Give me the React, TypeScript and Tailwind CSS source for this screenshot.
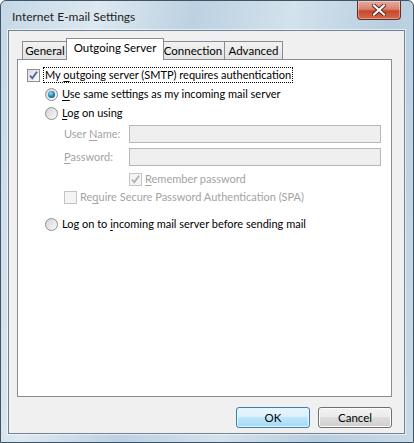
import type { ReactNode } from 'react';

const font = { fontFamily: 'Lato, "Noto Sans", sans-serif' };

function Key({ children }: { children: ReactNode }) {
  return <span className="underline underline-offset-2">{children}</span>;
}

function CheckBox({ checked, disabled }: { checked?: boolean; disabled?: boolean }) {
  return (
    <span
      className={`relative flex h-[13px] w-[13px] shrink-0 items-center justify-center border ${
        disabled ? 'border-[#c4c4c4] bg-[#f4f4f4]' : 'border-[#8e8f8f] bg-gradient-to-br from-[#dcdcdc] to-[#fbfbfb]'
      }`}
    >
      {checked && (
        <svg width="11" height="11" viewBox="0 0 11 11">
          <path
            d="M2 5.5 L4.3 8.3 L9 1.8"
            fill="none"
            stroke={disabled ? '#b0b0b0' : '#4c61a0'}
            strokeWidth="1.8"
          />
        </svg>
      )}
    </span>
  );
}

function Radio({ checked }: { checked?: boolean }) {
  return (
    <span className="flex h-[13px] w-[13px] shrink-0 items-center justify-center rounded-full border border-[#8e8f8f] bg-gradient-to-br from-[#d4d4d4] to-[#fafafa]">
      {checked && <span className="h-[7px] w-[7px] rounded-full bg-[radial-gradient(circle_at_40%_35%,#8fe0f8,#1c7fa6_55%,#0c4d6e)]" />}
    </span>
  );
}

function Tab({ label, width, active, first }: { label: string; width: string; active?: boolean; first?: boolean }) {
  if (active) {
    return (
      <div className={`relative z-10 -mx-[2px] -mb-px flex h-[22px] items-center justify-center border border-b-0 border-[#898c95] bg-white pb-[3px] text-[11.5px] ${width}`}>
        {label}
      </div>
    );
  }
  return (
    <div
      className={`flex h-[18px] items-center justify-center border border-b-0 border-[#898c95] bg-gradient-to-b from-[#f2f2f2] to-[#e3e3e3] text-[11.5px] ${width} ${
        first ? '' : 'border-l-0'
      }`}
    >
      {label}
    </div>
  );
}

function Button({ label, primary }: { label: string; primary?: boolean }) {
  return (
    <div
      className={`flex h-[21px] w-[74px] items-center justify-center rounded-[3px] border text-[11.5px] ${
        primary
          ? 'border-[#3c7fb1] bg-[linear-gradient(#eaf6fd_0%,#d9f0fc_50%,#bee6fd_50%,#a7d9f5_100%)] shadow-[inset_0_0_0_1px_#e6f4fc]'
          : 'border-[#707070] bg-[linear-gradient(#f2f2f2_0%,#ebebeb_50%,#dddddd_50%,#cfcfcf_100%)] shadow-[inset_0_0_0_1px_#fcfcfc]'
      }`}
    >
      {label}
    </div>
  );
}

function CloseButton() {
  return (
    <div className="flex h-[19px] w-[44px] items-center justify-center rounded-b-[4px] border border-t-0 border-[#6b2a1e] bg-[linear-gradient(#e9a99a_0%,#d88473_45%,#c7482b_55%,#d26a4c_100%)] shadow-[inset_0_0_0_1px_rgba(255,255,255,0.35)]">
      <svg width="14" height="12" viewBox="0 0 14 12">
        <path d="M2 1.5 L12 10.5 M12 1.5 L2 10.5" stroke="#5a2418" strokeWidth="4" strokeLinecap="square" />
        <path d="M2 1.5 L12 10.5 M12 1.5 L2 10.5" stroke="#ffffff" strokeWidth="2.2" strokeLinecap="square" />
      </svg>
    </div>
  );
}

export default function App() {
  return (
    <div
      style={font}
      className="flex h-[443px] w-[414px] flex-col overflow-hidden rounded-t-[6px] border border-[#3f5466] bg-[linear-gradient(100deg,#c5d8e7_0%,#dde8f0_20%,#bcd1e2_40%,#d3e2ec_60%,#b8cee0_80%,#c9dae7_100%)] text-black"
    >
      <div className="flex h-[29px] shrink-0 items-start justify-between pl-[11px] pr-[12px]">
        <span className="mt-[8px] text-[12px] leading-[16px] text-[#1e1e1e]">Internet E-mail Settings</span>
        <CloseButton />
      </div>

      <div className="mb-[8px] ml-[7px] mr-[8px] flex flex-1 flex-col border border-[#6f8192] bg-[#f0f0f0] shadow-[0_0_0_1px_rgba(255,255,255,0.6)]">
        <div className="ml-[8px] mr-[12px] mt-[7px] flex flex-col">
          <div className="flex items-end pl-[5px]">
            <Tab label="General" width="w-[46px]" first />
            <Tab label="Outgoing Server" width="w-[98px]" active />
            <Tab label="Connection" width="w-[63px]" />
            <Tab label="Advanced" width="w-[58px]" />
          </div>

          <div className="flex h-[338px] flex-col border border-[#898c95] bg-white pl-[9px] pr-[9px] pt-[7px] text-[11px]">
            <div className="flex h-[16px] items-center gap-[3px]">
              <CheckBox checked />
              <span className="border border-dotted border-black px-px leading-[14px]">
                My <Key>o</Key>utgoing server (SMTP) requires authentication
              </span>
            </div>

            <div className="ml-[18px] mt-[3px] flex h-[16px] items-center gap-[4px]">
              <Radio checked />
              <span>
                <Key>U</Key>se same settings as my incoming mail server
              </span>
            </div>

            <div className="ml-[18px] mt-[3px] flex h-[16px] items-center gap-[4px]">
              <Radio />
              <span>
                <Key>L</Key>og on using
              </span>
            </div>

            <div className="ml-[37px] mt-[4px] flex h-[18px] items-center text-[#a3a3a3]">
              <span className="w-[65px] whitespace-nowrap">
                User <Key>N</Key>ame:
              </span>
              <div className="h-[18px] w-[252px] border border-[#b5b8bb] bg-[#efefef]" />
            </div>

            <div className="ml-[37px] mt-[5px] flex h-[18px] items-center text-[#a3a3a3]">
              <span className="w-[65px] whitespace-nowrap">
                <Key>P</Key>assword:
              </span>
              <div className="h-[18px] w-[252px] border border-[#b5b8bb] bg-[#efefef]" />
            </div>

            <div className="ml-[102px] mt-[5px] flex h-[16px] items-center gap-[3px] text-[#a3a3a3]">
              <CheckBox checked disabled />
              <span>
                <Key>R</Key>emember password
              </span>
            </div>

            <div className="ml-[37px] mt-[2px] flex h-[16px] items-center gap-[3px] text-[#a3a3a3]">
              <CheckBox disabled />
              <span>
                Re<Key>q</Key>uire Secure Password Authentication (SPA)
              </span>
            </div>

            <div className="ml-[18px] mt-[11px] flex h-[16px] items-center gap-[4px]">
              <Radio />
              <span>
                Log on to <Key>i</Key>ncoming mail server before sending mail
              </span>
            </div>
          </div>
        </div>

        <div className="mr-[12px] mt-[10px] flex justify-end gap-[8px]">
          <Button label="OK" primary />
          <Button label="Cancel" />
        </div>
      </div>
    </div>
  );
}
